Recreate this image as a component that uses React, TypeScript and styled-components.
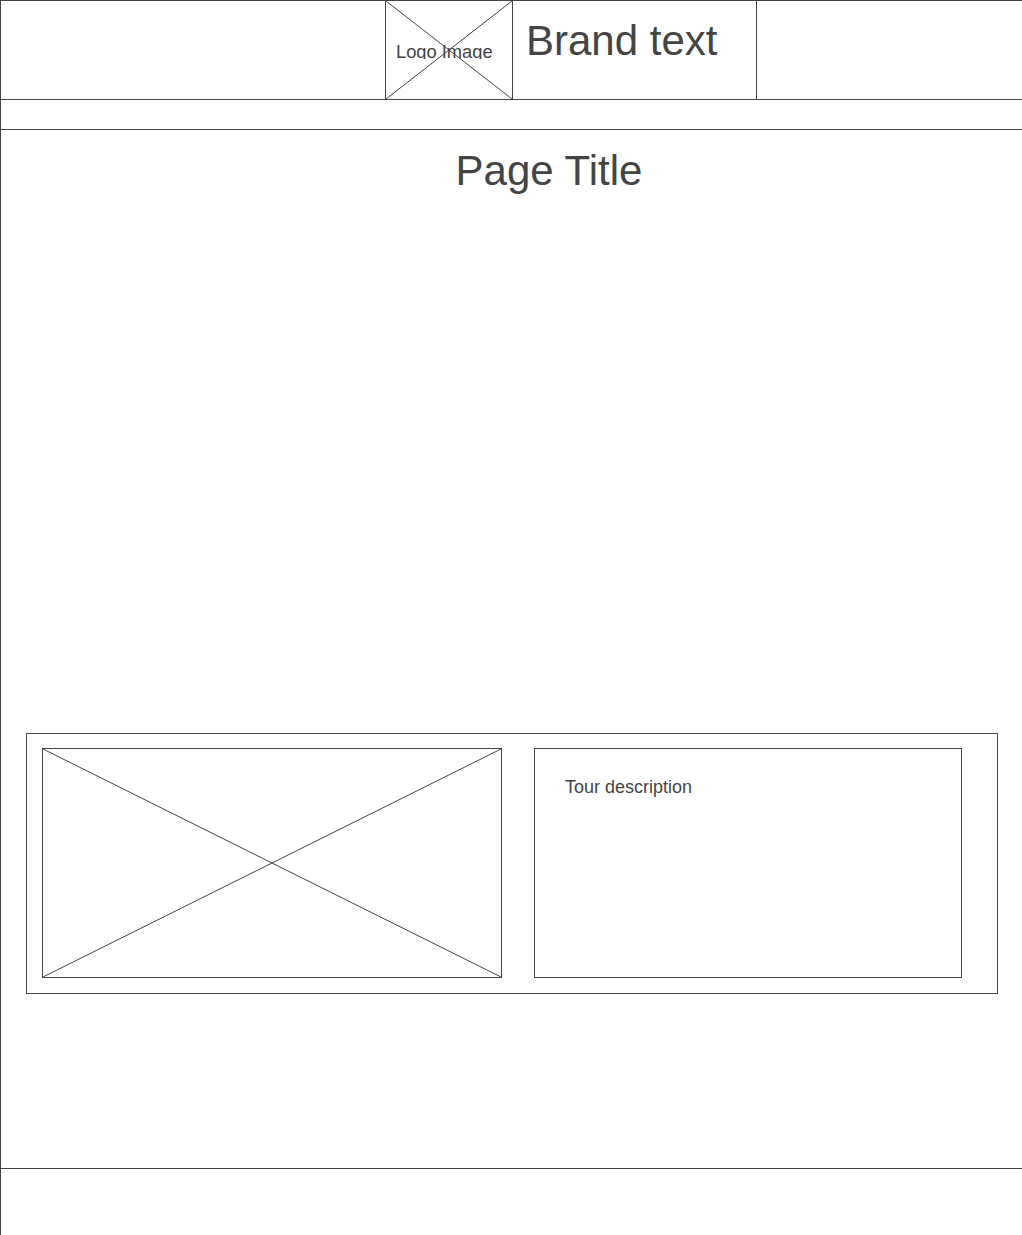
import React from 'react';
import styled, { createGlobalStyle } from 'styled-components';

const GlobalStyle = createGlobalStyle`
  html, body {
    margin: 0;
    padding: 0;
    background: #ffffff;
  }
  body {
    font-family: "Liberation Sans", Arial, sans-serif;
    color: #444444;
  }
`;

function Cross(): JSX.Element {
  return (
    <CrossSvg viewBox="0 0 100 100" preserveAspectRatio="none">
      <line x1="0" y1="0" x2="100" y2="100" vectorEffect="non-scaling-stroke" />
      <line x1="100" y1="0" x2="0" y2="100" vectorEffect="non-scaling-stroke" />
    </CrossSvg>
  );
}

export default function App(): JSX.Element {
  return (
    <>
      <GlobalStyle />
      <Page>
        <Header>
          <LogoBox>
            <Cross />
            <LogoLabel>Logo Image</LogoLabel>
          </LogoBox>
          <Brand>Brand text</Brand>
        </Header>
        <Nav />
        <Main>
          <Title>Page Title</Title>
          <TourCard>
            <TourImage>
              <Cross />
            </TourImage>
            <TourText>Tour description</TourText>
          </TourCard>
        </Main>
        <Footer />
      </Page>
    </>
  );
}

const Page = styled.div`
  display: flex;
  flex-direction: column;
  min-height: 1235px;
  box-sizing: border-box;
  border-top: 1px solid #444;
  border-left: 1px solid #444;
`;

const Header = styled.header`
  display: flex;
  height: 99px;
  box-sizing: border-box;
  padding-left: 384px;
  border-bottom: 1px solid #444;
`;

const LogoBox = styled.div`
  position: relative;
  width: 128px;
  box-sizing: border-box;
  border-left: 1px solid #444;
  border-right: 1px solid #444;
`;

const CrossSvg = styled.svg`
  position: absolute;
  inset: 0;
  width: 100%;
  height: 100%;
  stroke: #444;
  stroke-width: 1;
`;

// the label is cut off at the bottom, like in the mockup
const LogoLabel = styled.div`
  position: relative;
  margin-top: 40px;
  padding-left: 10px;
  height: 18px;
  overflow: hidden;
  font-size: 18.3px;
  line-height: 21px;
  white-space: nowrap;
`;

const Brand = styled.div`
  width: 244px;
  box-sizing: border-box;
  padding: 16px 0 0 13px;
  border-right: 1px solid #444;
  font-size: 42px;
  line-height: 48px;
  white-space: nowrap;
`;

const Nav = styled.nav`
  height: 30px;
  box-sizing: border-box;
  border-bottom: 1px solid #444;
`;

const Main = styled.main`
  flex: 1;
  display: flex;
  flex-direction: column;
  padding: 17px 0 174px 25px;
`;

const Title = styled.h1`
  margin: 0;
  padding-left: 50px;
  text-align: center;
  font-size: 42px;
  font-weight: 400;
  line-height: 48px;
`;

const TourCard = styled.section`
  display: flex;
  gap: 32px;
  width: 972px;
  height: 261px;
  margin-top: 538px;
  box-sizing: border-box;
  padding: 14px 0 15px 15px;
  border: 1px solid #444;
`;

const TourImage = styled.div`
  position: relative;
  width: 460px;
  box-sizing: border-box;
  border: 1px solid #444;
`;

const TourText = styled.div`
  width: 428px;
  box-sizing: border-box;
  padding: 28px 0 0 30px;
  border: 1px solid #444;
  font-size: 18px;
  line-height: 21px;
`;

const Footer = styled.footer`
  height: 67px;
  border-top: 1px solid #444;
`;
